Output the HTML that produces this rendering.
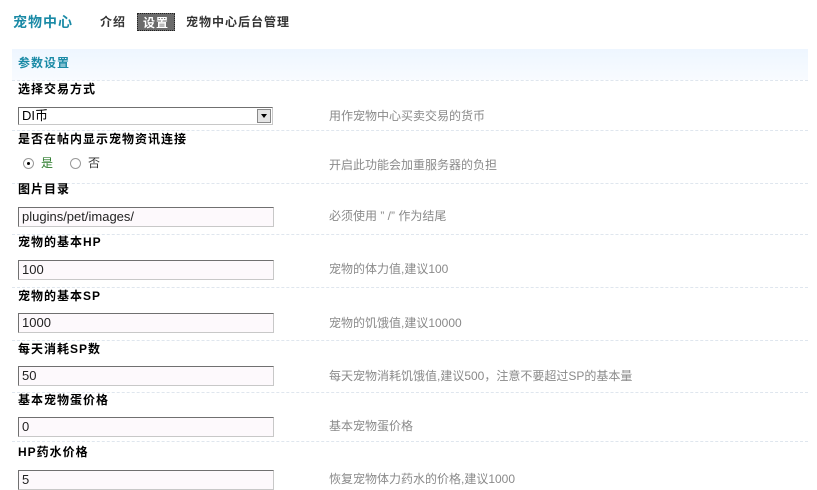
<!DOCTYPE html>
<html><head><meta charset="utf-8"><style>
body{margin:0;width:817px;height:485px;overflow:hidden;background:#fff;font-family:"Liberation Sans","Noto Sans CJK SC",sans-serif;font-size:12px;color:#000;position:relative}
.a{position:absolute;white-space:nowrap;line-height:14px}
.b{font-weight:bold;letter-spacing:1px}
.d{color:#8a8a8a;left:329px}
.sep{position:absolute;left:12px;width:796px;border-top:1px dashed #dfe6ee;height:0}
.in{position:absolute;left:18px;background:#fdf9fc;border:1px solid;border-color:#707070 #c8c8c8 #c8c8c8 #707070;font-size:13px;line-height:18px;padding-left:3px;box-sizing:border-box;width:256px;height:20px;color:#222}
</style></head><body>
<div class="a b" style="left:13px;top:14px;font-size:14px;color:#1a8aa6;line-height:16px">宠物中心</div>
<div class="a b" style="left:100px;top:15px;color:#333">介绍</div>
<div class="a b" style="left:137px;top:13px;width:38px;height:18px;background:#6b6b6b;color:#fff;text-align:center;line-height:18px;border:1px dotted #222;box-sizing:border-box">设置</div>
<div class="a b" style="left:186px;top:15px;color:#333">宠物中心后台管理</div>
<div style="position:absolute;left:12px;top:49px;width:796px;height:31px;background:linear-gradient(#eef6ff,#f8fbff)"></div>
<div class="sep" style="top:80px"></div>
<div class="a b" style="left:18px;top:56px;color:#1a8aa6">参数设置</div>

<div class="a b" style="left:18px;top:82px">选择交易方式</div>
<div style="position:absolute;left:18px;top:107px;width:255px;height:18px;border:1px solid;border-color:#707070 #c8c8c8 #c8c8c8 #707070;box-sizing:border-box;background:#fff">
<span class="a" style="left:3px;top:1px;font-size:13px">DI币</span>
<div style="position:absolute;right:1px;top:1px;width:14px;height:14px;background:#e4e4e4;border:1px solid #888;box-sizing:border-box"><div style="position:absolute;left:3px;top:4px;border:3px solid transparent;border-top:4px solid #000;border-bottom:0"></div></div></div>
<div class="a d" style="top:109px">用作宠物中心买卖交易的货币</div>
<div class="sep" style="top:130px"></div>

<div class="a b" style="left:18px;top:132px">是否在帖内显示宠物资讯连接</div>
<div style="position:absolute;left:23px;top:158px;width:9px;height:9px;border:1px solid #999;border-radius:50%;background:#fff"><div style="position:absolute;left:3px;top:3px;width:3px;height:3px;background:#000;border-radius:50%"></div></div>
<div class="a" style="left:41px;top:156px;color:#2a7a2a">是</div>
<div style="position:absolute;left:70px;top:158px;width:9px;height:9px;border:1px solid #999;border-radius:50%;background:#fff"></div>
<div class="a" style="left:88px;top:156px;color:#333">否</div>
<div class="a d" style="top:158px">开启此功能会加重服务器的负担</div>
<div class="sep" style="top:183px"></div>

<div class="a b" style="left:18px;top:182px">图片目录</div>
<div class="in" style="top:207px">plugins/pet/images/</div>
<div class="a d" style="top:209px">必须使用 ” /” 作为结尾</div>
<div class="sep" style="top:234px"></div>

<div class="a b" style="left:18px;top:235px">宠物的基本HP</div>
<div class="in" style="top:260px">100</div>
<div class="a d" style="top:262px">宠物的体力值,建议100</div>
<div class="sep" style="top:287px"></div>

<div class="a b" style="left:18px;top:289px">宠物的基本SP</div>
<div class="in" style="top:313px">1000</div>
<div class="a d" style="top:316px">宠物的饥饿值,建议10000</div>
<div class="sep" style="top:340px"></div>

<div class="a b" style="left:18px;top:342px">每天消耗SP数</div>
<div class="in" style="top:366px">50</div>
<div class="a d" style="top:369px">每天宠物消耗饥饿值,建议500，注意不要超过SP的基本量</div>
<div class="sep" style="top:392px"></div>

<div class="a b" style="left:18px;top:393px">基本宠物蛋价格</div>
<div class="in" style="top:417px">0</div>
<div class="a d" style="top:419px">基本宠物蛋价格</div>
<div class="sep" style="top:441px"></div>

<div class="a b" style="left:18px;top:445px">HP药水价格</div>
<div class="in" style="top:470px">5</div>
<div class="a d" style="top:472px">恢复宠物体力药水的价格,建议1000</div>
</body></html>
